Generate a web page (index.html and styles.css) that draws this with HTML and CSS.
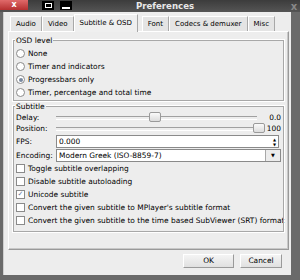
FILE: index.html
```html
<!DOCTYPE html>
<html lang="en">

<head>
    <meta charset="UTF-8">
    <title>Preferences</title>
    <link rel="stylesheet" href="styles.css">
</head>

<body>
    <div class="window">
        <div class="titlebar">
            <span class="btn-close">x</span>
            <span class="btn-box btn-max"><i></i></span>
            <span class="btn-box btn-min"><i></i></span>
            <span class="title">Preferences</span>
            <span class="btn-x">x</span>
        </div>

        <div class="client">
            <div class="tabs">
                <div class="tab">Audio</div>
                <div class="tab">Video</div>
                <div class="tab active">Subtitle &amp; OSD</div>
                <div class="tab">Font</div>
                <div class="tab">Codecs &amp; demuxer</div>
                <div class="tab">Misc</div>
            </div>

            <div class="pane">
                <div class="group osd">
                    <div class="legend">OSD level</div>
                    <div class="row"><span class="radio"></span>None</div>
                    <div class="row"><span class="radio"></span>Timer and indicators</div>
                    <div class="row"><span class="radio on"></span>Progressbars only</div>
                    <div class="row"><span class="radio"></span>Timer, percentage and total time</div>
                </div>

                <div class="group subs">
                    <div class="legend">Subtitle</div>
                    <div class="field">
                        <span class="label">Delay:</span>
                        <div class="slider"><span class="handle" style="left: calc(49% - 5px)"></span></div>
                        <span class="value">0.0</span>
                    </div>
                    <div class="field">
                        <span class="label">Position:</span>
                        <div class="slider"><span class="handle" style="left: calc(100% - 4px)"></span></div>
                        <span class="value">100</span>
                    </div>
                    <div class="field input-row">
                        <span class="label">FPS:</span>
                        <div class="entry">0.000<span class="spin">&#9650;<br>&#9660;</span></div>
                    </div>
                    <div class="field input-row">
                        <span class="label">Encoding:</span>
                        <div class="combo"><span class="combo-text">Modern Greek (ISO-8859-7)</span><span class="arrow">&#9660;</span></div>
                    </div>
                    <div class="row"><span class="check"></span>Toggle subtitle overlapping</div>
                    <div class="row"><span class="check"></span>Disable subtitle autoloading</div>
                    <div class="row"><span class="check on">&#10003;</span>Unicode subtitle</div>
                    <div class="row"><span class="check"></span>Convert the given subtitle to MPlayer's subtitle format</div>
                    <div class="row"><span class="check"></span>Convert the given subtitle to the time based SubViewer (SRT) format</div>
                </div>
            </div>

            <div class="buttons">
                <div class="button ok">OK</div>
                <div class="button cancel">Cancel</div>
            </div>
        </div>
    </div>
</body>

</html>
```

FILE: styles.css
```css
html,
body {
    margin: 0;
    background-color: #4a4a4a;
}

body {
    font-family: "DejaVu Sans", sans-serif;
    font-size: 7.45px;
    color: #000;
}

.window {
    width: 300px;
    height: 280px;
    display: flex;
    flex-direction: column;
    background-color: #6a6a6a;
}

.titlebar {
    height: 12px;
    display: flex;
    align-items: center;
    background: linear-gradient(#3c3c3c, #555);
}

.btn-close {
    width: 28px;
    height: 10px;
    margin-top: -2px;
    background: linear-gradient(#e06a6a, #b53030);
    color: #fff;
    font-weight: bold;
    font-size: 8px;
    line-height: 9px;
    text-align: center;
}

.btn-box {
    width: 12px;
    height: 9px;
    margin-top: -2px;
    background-color: #000;
    display: flex;
    justify-content: center;
    align-items: center;
}

.btn-max {
    margin-left: 14px;
}

.btn-min {
    margin-left: 6px;
    align-items: flex-end;
}

.btn-max i {
    width: 5px;
    height: 3px;
    border: 1px solid #fff;
}

.btn-min i {
    width: 8px;
    height: 2px;
    margin-bottom: 1px;
    background-color: #fff;
}

.title {
    flex: 1;
    text-align: center;
    color: #e8e8e8;
    font-weight: bold;
    font-size: 8.6px;
    padding-right: 30px;
}

.btn-x {
    width: 12px;
    color: #888;
    font-weight: bold;
    font-size: 10px;
    text-align: center;
}

.client {
    flex: 1;
    margin: 0 9px 5px 3px;
    background-color: #ededed;
    border-left: 1px solid #cfcfcf;
    display: flex;
    flex-direction: column;
    padding: 1px 2px 0 4px;
}

.tabs {
    display: flex;
    align-items: flex-end;
    height: 18px;
    padding-left: 2px;
    white-space: nowrap;
    font-size: 7px;
}

.tab {
    height: 14px;
    line-height: 14px;
    padding: 0 5px;
    border: 1px solid #a8a8a8;
    border-bottom: none;
    border-top-color: #fff;
    border-left-color: #fff;
    background-color: #e4e4e4;
}

.tab.active {
    height: 17px;
    line-height: 16px;
    background-color: #efefef;
    padding: 0 5px;
    margin: 0 4px -1px 0;
    position: relative;
}

.pane {
    height: 217px;
    border: 1px solid #9a9a9a;
    border-top-color: #fff;
    border-left-color: #fff;
    box-shadow: inset -1px -1px 0 #c8c8c8;
    padding: 0 3px 0 3px;
    display: flex;
    flex-direction: column;
}

.group {
    border: 1px solid #fff;
    outline: 1px solid #a8a8a8;
    outline-offset: -2px;
    position: relative;
    padding: 7px 3px 2px 3px;
}

.legend {
    position: absolute;
    top: -4px;
    left: 2px;
    padding: 0 1px;
    background-color: #ededed;
}

.osd {
    height: 52px;
    margin-top: 7px;
}

.subs {
    height: 118px;
    margin-top: 3px;
    padding-top: 6px;
}

.row {
    height: 13px;
    display: flex;
    align-items: center;
    gap: 3px;
    white-space: nowrap;
}

.radio {
    flex: none;
    width: 9px;
    height: 9px;
    border: 1px solid #8a8a8a;
    border-radius: 50%;
    background-color: #fff;
    box-sizing: border-box;
    display: flex;
    justify-content: center;
    align-items: center;
}

.radio.on::after {
    content: "";
    width: 4px;
    height: 4px;
    border-radius: 50%;
    background-color: #7a8aa0;
}

.check {
    flex: none;
    width: 9px;
    height: 9px;
    border: 1px solid #8a8a8a;
    background-color: #fff;
    box-sizing: border-box;
    font-size: 7px;
    line-height: 7px;
    text-align: center;
    color: #6878a0;
}

.field {
    height: 11px;
    display: flex;
    align-items: center;
}

.input-row {
    height: 13px;
    margin-top: 1px;
}

.label {
    width: 40px;
    flex: none;
}

.slider {
    flex: 1;
    height: 2px;
    border-top: 1px solid #a0a0a0;
    border-bottom: 1px solid #fff;
    position: relative;
    margin-right: 8px;
}

.handle {
    position: absolute;
    top: -5px;
    width: 10px;
    height: 8px;
    border: 1px solid #9a9a9a;
    border-radius: 2px;
    background: linear-gradient(#fafafa, #dcdcdc);
}

.value {
    width: 16px;
    text-align: right;
}

.entry,
.combo {
    flex: 1;
    height: 13px;
    border: 1px solid #8a8a8a;
    background-color: #fff;
    box-sizing: border-box;
    display: flex;
    align-items: center;
    padding-left: 2px;
}

.entry {
    margin-right: 2px;
}

.spin {
    margin-left: auto;
    font-size: 4px;
    line-height: 5px;
    text-align: center;
    width: 7px;
}

.combo-text {
    flex: 1;
}

.arrow {
    width: 14px;
    height: 11px;
    border-left: 1px solid #a8a8a8;
    background-color: #ececec;
    font-size: 5px;
    line-height: 11px;
    text-align: center;
}

.buttons {
    flex: 1;
    display: flex;
    justify-content: flex-end;
    align-items: flex-start;
    padding: 4px 7px 0 0;
    gap: 6px;
}

.button {
    height: 12px;
    line-height: 12px;
    text-align: center;
    border: 1px solid #9a9a9a;
    border-top-color: #fff;
    border-left-color: #fff;
    background: linear-gradient(#f4f4f4, #e0e0e0);
}

.ok {
    width: 49px;
}

.cancel {
    width: 40px;
}
```
